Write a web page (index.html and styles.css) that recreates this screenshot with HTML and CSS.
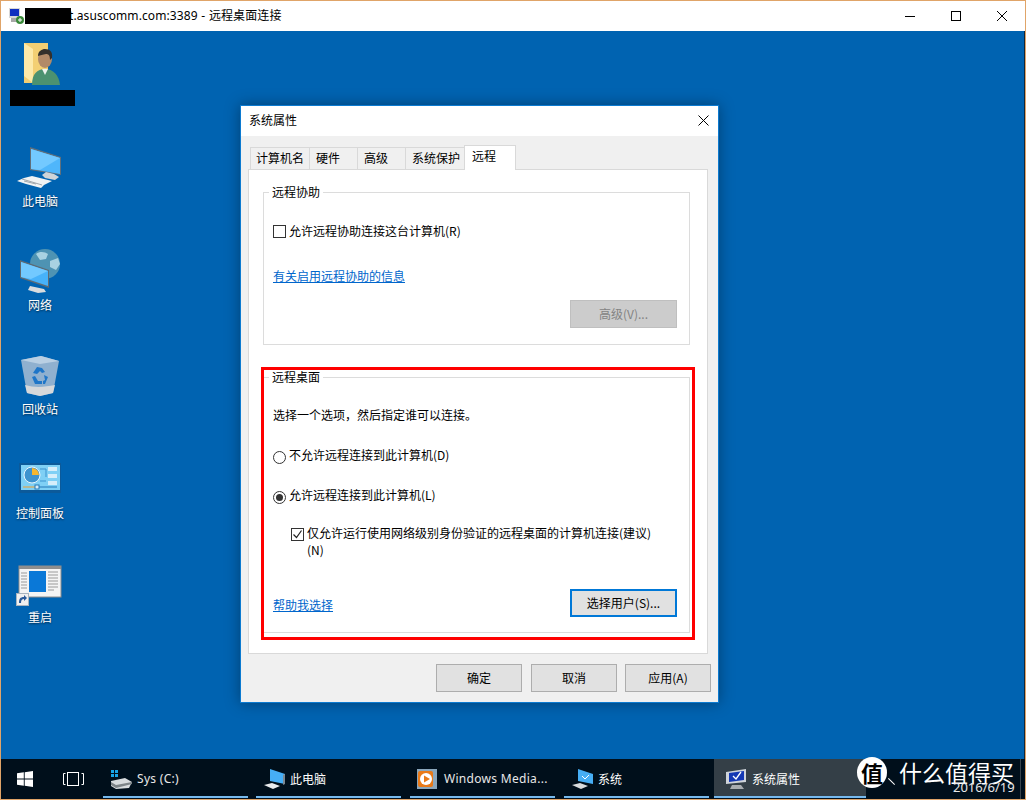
FILE: index.html
```html
<!DOCTYPE html>
<html lang="zh-CN">
<head>
<meta charset="utf-8">
<title>远程桌面连接</title>
<link rel="stylesheet" href="styles.css">
</head>
<body>
<div class="rdp">
  <header class="rdp-title">
    <svg class="rdp-icon" width="16" height="16" viewBox="0 0 16 16"><rect x="0" y="0" width="11" height="10" fill="#d8d8d8"/><rect x="1" y="1" width="9" height="7" fill="#1030c0"/><rect x="2" y="10" width="9" height="4" fill="#a8a8a8"/><circle cx="11" cy="12" r="4" fill="#3a8a3a"/><path d="M9 12h4M11 10v4" stroke="#fff" stroke-width="1"/></svg>
    <span class="redact-title"></span><span class="rdp-name">t.asuscomm.com:3389 - 远程桌面连接</span>
    <div class="win-ctrls">
      <svg width="46" height="30" viewBox="0 0 46 30"><path d="M18 15.5h10" stroke="#000"/></svg>
      <svg width="46" height="30" viewBox="0 0 46 30"><rect x="18.500" y="10.500" width="9" height="9" fill="none" stroke="#000"/></svg>
      <svg width="46" height="30" viewBox="0 0 46 30"><path d="M18 10l10 10M28 10l-10 10" stroke="#000"/></svg>
    </div>
  </header>

  <main class="desktop">
    <div class="icons">
      <div class="d-item">
        <svg width="48" height="48" viewBox="0 0 48 48"><path d="M8 2h24v40H8z" fill="#f3cf73"/><path d="M8 2l9 6v34l-9-7z" fill="#fde9a8"/><ellipse cx="29" cy="18" rx="7" ry="9" fill="#b28a68"/><path d="M22 15c0-5 4-7 7-7 5 0 8 3 7 9l-2 2c0-4-1-6-4-6-3 1-6 1-8 2z" fill="#33302c"/><path d="M16 44c0-11 5-16 13-16s14 6 15 16z" fill="#4c9270"/><path d="M26 28l3 6 3-6z" fill="#eef2ee"/></svg>
        <span class="d-redact"></span>
      </div>
      <div class="d-item">
        <svg width="48" height="48" viewBox="0 0 48 48"><path d="M14 2l31 10v18l-31-5z" fill="#5f6f7c"/><path d="M15 4l29 9v16l-29-5z" fill="#4fb6fb"/><path d="M15 4l29 9-20 12-9-1z" fill="#73c9ff"/><path d="M30 27l8 2 5 3-4 3-10-2-3-3z" fill="#cfd4d8"/><path d="M8 33l8-2 20 5-8 4-3 3-15-4-9-3z" fill="#f1f3f4"/><path d="M8 36l12 3M6 34l20 6" stroke="#9fa6ac" stroke-width="1"/></svg>
        <span class="d-label">此电脑</span>
      </div>
      <div class="d-item">
        <svg width="48" height="48" viewBox="0 0 48 48"><circle cx="29" cy="15" r="15" fill="#4e93b3"/><path d="M20 5c4-3 9-2 12 0l-2 5-6 1zM34 12l8-3 2 6-4 6-6-3zM24 22l6 1-2 6-3-1z" fill="#a9d2e2"/><path d="M4 11l29 10v18L4 29z" fill="#5d6b75"/><path d="M5 13l27 9v15L5 28z" fill="#47b2fa"/><path d="M5 13l27 9-17 8-10-2z" fill="#72c9ff"/><path d="M14 37l14 3 2 3-8 1-10-3z" fill="#d9dcde"/></svg>
        <span class="d-label">网络</span>
      </div>
      <div class="d-item">
        <svg width="48" height="48" viewBox="0 0 48 48"><path d="M5 7l20-4 18 5-6 32-13 3-13-3z" fill="#8fb0cf"/><path d="M5 7l20-4 18 5-19 3z" fill="#b9cfe3"/><path d="M9 32c10 3 20 2 30 0l-2 8-13 3-13-3z" fill="#d6d8da"/><path d="M17 20l4-6 5 1 3 4-3 1-2-2-3 3zM16 24l3-1 3 5 4 0v3l-7 0zM28 22l4 2-3 7-2 0 0-3 2-1z" fill="#1f76c8"/></svg>
        <span class="d-label">回收站</span>
      </div>
      <div class="d-item">
        <svg width="48" height="48" viewBox="0 0 48 48"><rect x="3" y="6" width="42" height="30" fill="#0c5a9a"/><rect x="5" y="8" width="39" height="25" fill="#7fd0f5"/><circle cx="16" cy="18" r="8" fill="#3d93cf" stroke="#eaf6fc"/><path d="M16 18v-7a7 7 0 0 1 7 7z" fill="#f6b62e"/><path d="M24 12h6v8M24 24h6" fill="none" stroke="#3d93cf"/><rect x="32" y="10" width="9" height="4" fill="#d6eefa"/><rect x="32" y="17" width="9" height="4" fill="#d6eefa"/><rect x="32" y="24" width="9" height="4" fill="#d6eefa"/><path d="M7 30h12" stroke="#f0a030"/><path d="M23 30h18" stroke="#2578b8"/><rect x="19" y="28" width="4" height="4" fill="#d6eefa" stroke="#2578b8"/></svg>
        <span class="d-label">控制面板</span>
      </div>
      <div class="d-item">
        <svg width="48" height="48" viewBox="0 0 48 48"><rect x="3" y="5" width="42" height="31" fill="#f4f4f4" stroke="#8e8e8e"/><rect x="3" y="5" width="42" height="3" fill="#8e8e8e"/><rect x="13" y="10" width="17" height="21" fill="#0a78d7"/><path d="M5 12h6M5 15h6M5 18h6M5 21h6M5 24h6M5 27h6M32 11h10M32 14h10M32 17h10M32 20h10M32 23h10M32 26h10M32 29h6" stroke="#9a9a9a"/><rect x="0.500" y="32.500" width="12" height="12" fill="#f0f0f0" stroke="#a9b4bf"/><path d="M3 42c0-4 1-6 5-6v-2l3 3-3 3v-2c-2 0-3 1-3 4z" fill="#2a5a9a"/></svg>
        <span class="d-label">重启</span>
      </div>
    </div>

    <section class="dialog">
      <div class="dlg-title"><span>系统属性</span>
        <svg class="dlg-close" width="11" height="11" viewBox="0 0 11 11"><path d="M.5.500l10 10M10.500.500l-10 10" stroke="#000"/></svg>
      </div>
      <div class="dlg-body">
        <div class="tabs">
          <span class="tab tab-a">计算机名</span>
          <span class="tab tab-b">硬件</span>
          <span class="tab tab-b">高级</span>
          <span class="tab tab-c">系统保护</span>
          <span class="tab tab-on">远程</span>
        </div>
        <div class="panel">
          <div class="group group-assist">
            <span class="legend">远程协助</span>
            <label class="row row-assist"><span class="box"></span>允许远程协助连接这台计算机(R)</label>
            <a class="link link-assist">有关启用远程协助的信息</a>
            <div class="btn-row btn-row-assist"><span class="btn btn-off">高级(V)...</span></div>
          </div>
          <div class="group group-desk">
            <span class="legend">远程桌面</span>
            <p class="intro">选择一个选项，然后指定谁可以连接。</p>
            <label class="row row-r1"><span class="radio"></span>不允许远程连接到此计算机(D)</label>
            <label class="row row-r2"><span class="radio radio-on"></span>允许远程连接到此计算机(L)</label>
            <label class="row row-nla"><span class="box box-on"><svg width="11" height="11" viewBox="0 0 11 11"><path d="M1.500 5.500l3 3 5-7" fill="none" stroke="#222" stroke-width="1.200"/></svg></span><span class="nla-text">仅允许运行使用网络级别身份验证的远程桌面的计算机连接(建议)(N)</span></label>
            <div class="btn-row btn-row-desk"><a class="link link-help">帮助我选择</a><span class="btn btn-focus">选择用户(S)...</span></div>
          </div>
        </div>
        <div class="dlg-foot">
          <span class="btn btn-foot">确定</span>
          <span class="btn btn-foot btn-foot-2">取消</span>
          <span class="btn btn-foot btn-foot-3">应用(A)</span>
        </div>
      </div>
      <div class="redbox"></div>
    </section>
  </main>

  <footer class="taskbar">
    <svg class="start" width="16" height="16" viewBox="0 0 16 16"><path d="M0 2.300l6.800-1V7.600H0zM7.700 1.200L16 0v7.600H7.700zM0 8.400h6.800v6.300l-6.800-1zM7.700 8.400H16V16l-8.300-1.200z" fill="#fff"/></svg>
    <svg class="taskview" width="21" height="14" viewBox="0 0 21 14"><rect x="4.500" y=".5" width="11" height="13" fill="none" stroke="#fff"/><path d="M2.500 1.500H.5v11h2M18.500 1.500h2v11h-2" fill="none" stroke="#fff"/></svg>
    <div class="task task-1">
      <svg width="22" height="20" viewBox="0 0 22 20"><path d="M1 12l14-3 7 4-3 6-13 1-5-3z" fill="#d8dcdf"/><path d="M1 13l5 3 16-3v2l-16 4-5-3z" fill="#7d8488"/><path d="M1 1h3v3H1zM5 1h3v3H5zM1 5h3v3H1zM5 5h3v3H5z" fill="#17a5e8"/></svg>
      <span class="latin">Sys (C:)</span>
    </div>
    <div class="task task-2">
      <svg width="22" height="22" viewBox="0 0 22 22"><path d="M7 1l15 5v10L7 13z" fill="#46aef5"/><path d="M22 6v10l-2 1V7z" fill="#7c8790"/><path d="M1 17l8-2 8 3-7 3z" fill="#e9ecee"/></svg>
      <span>此电脑</span>
    </div>
    <div class="task task-3">
      <svg width="20" height="20" viewBox="0 0 20 20"><rect width="20" height="20" fill="#8aa6bb"/><rect x="1" y="2" width="15" height="16" rx="2" fill="#e97a18"/><circle cx="9" cy="10" r="6" fill="#fff"/><path d="M7 6.500l6 3.500-6 3.500z" fill="#e97a18"/></svg>
      <span class="latin">Windows Media...</span>
    </div>
    <div class="task task-4">
      <svg width="22" height="22" viewBox="0 0 22 22"><path d="M7 1l15 5v10L7 13z" fill="#46aef5"/><path d="M11 8l3 3 4-4" fill="none" stroke="#fff"/><path d="M1 17l8-2 8 3-7 3z" fill="#d9dcde"/></svg>
      <span>系统</span>
    </div>
    <div class="task task-5">
      <svg width="22" height="22" viewBox="0 0 22 22"><path d="M1 4l20-3v13L1 16z" fill="#cfd4da"/><path d="M4 5l15-2v9L4 14z" fill="#1438b4"/><path d="M8 8l3 3 5-7" fill="none" stroke="#fff" stroke-width="1.300"/><path d="M7 17h9l3 4H5z" fill="#a8acb0"/></svg>
      <span>系统属性</span>
    </div>
    <div class="tray-line"></div>
    <div class="watermark">
      <span class="wm-badge">值</span>
      <span class="wm-slash"></span>
      <span class="wm-text">什么值得买</span>
    </div>
    <span class="clock">2016/6/19</span>
  </footer>
</div>
</body>
</html>
```

FILE: styles.css
```css
* { box-sizing: border-box; }
html, body { margin: 0; padding: 0; }
body {
  width: 1026px;
  height: 800px;
  overflow: hidden;
  font: 12px/16px "Noto Sans CJK SC", "Noto Sans", sans-serif;
  color: #000;
}
.rdp {
  width: 1026px;
  height: 800px;
  border: 1px solid #e0a468;
  display: flex;
  flex-direction: column;
}
.rdp-title {
  height: 30px;
  flex: none;
  background: #fff;
  display: flex;
  align-items: center;
  padding-left: 8px;
}
.rdp-icon { flex: none; }
.redact-title { width: 46px; height: 16px; background: #000; flex: none; }
.rdp-name { font-family: "Noto Sans", "Noto Sans CJK SC", sans-serif; letter-spacing: .1px; word-spacing: .4px; white-space: nowrap; margin-left: -2px; }
.win-ctrls { margin-left: auto; display: flex; }
.win-ctrls svg { display: block; }

.desktop {
  flex: 1;
  position: relative;
  background: #0063b1;
  border-right: 1px solid #10273c;
  min-height: 0;
}
.icons {
  padding-top: 10px;
  width: 78px;
  display: flex;
  flex-direction: column;
  align-items: center;
}
.d-item {
  height: 104px;
  width: 78px;
  display: flex;
  flex-direction: column;
  align-items: center;
}
.d-item svg { display: block; flex: none; }
.d-label {
  color: #fff;
  text-shadow: 0 1px 2px rgba(0,0,0,.6);
  line-height: 16px;
}
.d-redact { width: 65px; height: 16px; background: #000; margin: 1px 0 0 4px; }

.dialog {
  position: absolute;
  left: 239px;
  top: 74px;
  width: 479px;
  height: 598px;
  border: 1px solid #0c7ad0;
  box-shadow: 0 0 14px rgba(0,0,0,.35);
  background: #f0f0f0;
  display: flex;
  flex-direction: column;
}
.dlg-title {
  height: 30px;
  flex: none;
  background: #fff;
  display: flex;
  align-items: center;
  justify-content: space-between;
  padding: 0 9px 2px 8px;
}
.dlg-close { display: block; }
.dlg-body {
  flex: 1;
  padding: 9px 9px 0 7px;
  display: flex;
  flex-direction: column;
  min-height: 0;
}
.tabs { display: flex; align-items: flex-end; height: 24px; padding-left: 2px; flex: none; position: relative; z-index: 1; }
.tab {
  height: 22px;
  border: 1px solid #d9d9d9;
  border-bottom: 0;
  margin-right: -1px;
  background: #f0f0f0;
  padding-left: 5px;
  line-height: 20px;
  white-space: nowrap;
}
.tab-a { width: 60px; }
.tab-b { width: 49px; padding-left: 6px; }
.tab-c { width: 60px; padding-left: 6px; }
.tab-on { width: 52px; height: 25px; background: #fff; padding-left: 7px; margin-right: 0; line-height: 19px; position: relative; top: 1px; }
.panel {
  width: 460px;
  height: 485px;
  flex: none;
  background: #fff;
  border: 1px solid #d9d9d9;
  padding: 22px 0 0 14px;
}
.group {
  width: 427px;
  border: 1px solid #dcdcdc;
  position: relative;
  padding-left: 9px;
}
.group-assist { height: 153px; padding-top: 30px; }
.group-desk { height: 256px; margin-top: 32px; padding-top: 29px; }
.legend {
  position: absolute;
  left: 5px;
  top: -9px;
  padding: 0 3px;
  background: #fff;
}
.row { display: flex; align-items: flex-start; }
.box, .radio {
  width: 13px;
  height: 13px;
  border: 1px solid #333;
  background: #fff;
  flex: none;
  margin: 2px 3px 0 0;
  display: block;
}
.box-on { margin-top: 4px; }
.box-on svg { display: block; }
.radio { border-radius: 50%; margin-top: 4px; position: relative; }
.radio-on::after {
  content: "";
  position: absolute;
  left: 2px;
  top: 2px;
  width: 7px;
  height: 7px;
  border-radius: 50%;
  background: #333;
}
.link { color: #0066cc; text-decoration: underline; display: block; }
.link-assist { margin-top: 29px; width: max-content; }
.link-help { margin-top: 3px; }
.btn-row { display: flex; justify-content: flex-end; padding-right: 12px; }
.btn-row-assist { margin-top: 16px; }
.btn-row-desk { justify-content: space-between; align-items: center; margin-top: 31px; }
.btn {
  width: 107px;
  height: 28px;
  flex: none;
  display: flex;
  align-items: center;
  justify-content: center;
  background: #e1e1e1;
  border: 1px solid #adadad;
}
.btn-off { background: #cccccc; border-color: #bfbfbf; color: #838383; }
.btn-focus { border: 2px solid #0078d7; }
.intro { margin: 0; }
.row-r1 { margin-top: 24px; }
.row-r2 { margin-top: 23px; }
.row-nla { margin: 20px 0 0 18px; }
.nla-text { width: 350px; line-height: 17px; }
.dlg-foot { display: flex; padding: 10px 0 0 188px; flex: none; }
.btn-foot { width: 86px; }
.btn-foot-2 { margin-left: 9px; }
.btn-foot-3 { margin-left: 8px; }
.redbox {
  position: absolute;
  left: 20px;
  top: 261px;
  width: 434px;
  height: 273px;
  border: 3px solid #f00;
  pointer-events: none;
}

.taskbar {
  height: 40px;
  flex: none;
  background: #000f1b;
  display: flex;
  align-items: stretch;
  position: relative;
  color: #fff;
}
.start { margin: 12px 0 0 16px; flex: none; }
.taskview { margin: 13px 0 0 30px; flex: none; }
.task {
  width: 145px;
  flex: none;
  display: flex;
  align-items: center;
  border-bottom: 2px solid #76b9ed;
  margin-bottom: 1px;
  padding-top: 2px;
  gap: 5px;
}
.task svg { flex: none; }
.task-1 { margin-left: 19px; padding-left: 7px; }
.task-2 { margin-left: 8px; padding-left: 7px; }
.task-3 { margin-left: 9px; padding-left: 7px; gap: 7px; }
.task-4 { margin-left: 9px; padding-left: 7px; }
.task-5 { margin-left: 5px; width: 152px; padding-left: 11px; background: #343f47; }
.latin { font-family: "Noto Sans", sans-serif; letter-spacing: .3px; color: #e8e8e8; }
.tray-line { position: absolute; right: 4px; top: 0; bottom: 0; width: 1px; background: #3a444c; }
.watermark {
  position: absolute;
  left: 856px;
  top: -2px;
  display: flex;
  align-items: flex-start;
  color: #fff;
}
.wm-badge {
  width: 30px;
  height: 31px;
  border-radius: 50%;
  background: #fff;
  color: #000;
  font-size: 22px;
  line-height: 30px;
  text-align: center;
  flex: none;
  font-weight: 700;
}
.wm-slash { width: 9px; height: 1px; background: #fff; transform: rotate(45deg); margin: 24px 3px 0 0; flex: none; }
.wm-text { font-size: 23px; line-height: 30px; white-space: nowrap; width: 118px; }
.clock { position: absolute; left: 952px; top: 20px; font-family: "Noto Sans", sans-serif; font-size: 13px; color: #e8e8e8; }
```
